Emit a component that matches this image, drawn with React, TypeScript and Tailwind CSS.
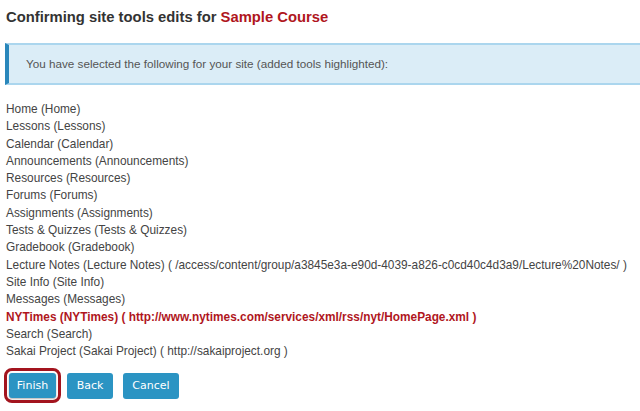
const TOOLS = [
  'Home (Home)',
  'Lessons (Lessons)',
  'Calendar (Calendar)',
  'Announcements (Announcements)',
  'Resources (Resources)',
  'Forums (Forums)',
  'Assignments (Assignments)',
  'Tests & Quizzes (Tests & Quizzes)',
  'Gradebook (Gradebook)',
  'Lecture Notes (Lecture Notes) ( /access/content/group/a3845e3a-e90d-4039-a826-c0cd40c4d3a9/Lecture%20Notes/ )',
  'Site Info (Site Info)',
  'Messages (Messages)',
  'NYTimes (NYTimes) ( http://www.nytimes.com/services/xml/rss/nyt/HomePage.xml )',
  'Search (Search)',
  'Sakai Project (Sakai Project) ( http://sakaiproject.org )',
]

const ADDED = 'NYTimes (NYTimes) ( http://www.nytimes.com/services/xml/rss/nyt/HomePage.xml )'

export default function App() {
  return (
    <div className="w-[640px] h-[411px] bg-white overflow-hidden font-['Liberation_Sans',Arial,sans-serif] text-[#333]">
      <h2 className="pl-[6px] pt-[9px] text-[14.8px] leading-[17px] font-bold text-[#333]">
        Confirming site tools edits for <span className="text-[#b0161d]">Sample Course</span>
      </h2>

      <div className="mt-[17px] ml-[5px] h-[42px] flex items-center pl-[17px] bg-[#dbedf7] border-y-2 border-[#abd6ee] border-l-4 border-l-[#2a87bb] text-[11.7px] text-[#555]">
        You have selected the following for your site (added tools highlighted):
      </div>

      <ul className="mt-[16px] pl-[6px] text-[11.85px] leading-[17.3px] whitespace-nowrap">
        {TOOLS.map(t => (
          <li key={t} className={t === ADDED ? 'font-bold text-[#b0161d]' : 'text-[#444]'}>
            {t}
          </li>
        ))}
      </ul>

      <div className="mt-[13px] pl-[9px] flex font-['DejaVu_Sans',Verdana,sans-serif] text-[11px] text-white">
        <button className="w-[47px] h-[25px] rounded-[3px] bg-[#2b94c3] outline-3 outline-offset-2 outline-[#a3141e] shadow-[0_1px_2px_rgba(0,0,0,0.3)]">Finish</button>
        <button className="ml-[11px] w-[46px] h-[26px] rounded-[3px] bg-[#2b94c3]">Back</button>
        <button className="ml-[10px] w-[56px] h-[26px] rounded-[3px] bg-[#2b94c3]">Cancel</button>
      </div>
    </div>
  )
}
